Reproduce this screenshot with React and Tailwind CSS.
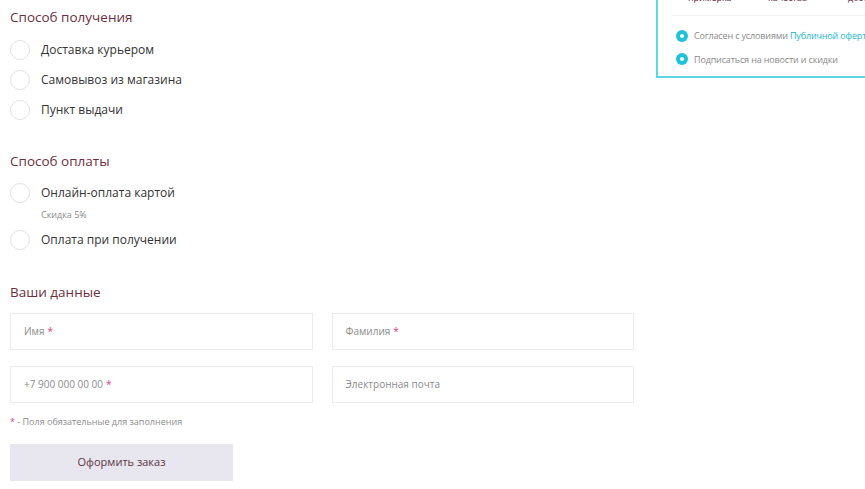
// Checkout form: delivery, payment and contacts

const font = { fontFamily: '"Open Sans", "Noto Sans", sans-serif' };

const Radio = ({ label, note }) => (
  <div className="flex items-start">
    <div className="w-[20px] h-[20px] rounded-full border border-[#e2e2e2] bg-white shrink-0"></div>
    <div className="ml-[11px]">
      <div className="text-[12px] leading-[20px] text-[#333]">{label}</div>
      {note && <div className="text-[9px] leading-[14px] mt-[5px] text-[#8a8a8a]">{note}</div>}
    </div>
  </div>
);

const Heading = ({ children }) => (
  <h2 className="text-[13.5px] leading-[20px] text-[#6d2f40]">{children}</h2>
);

const Field = ({ placeholder, required }) => (
  <div className="h-[37px] border border-[#ececec] bg-white flex items-center px-[13px] text-[10px] text-[#8c8c8c]">
    {placeholder}
    {required && <span className="text-[#e0407a] ml-[3px]">*</span>}
  </div>
);

const Check = ({ children }) => (
  <div className="flex items-center">
    <div className="w-[12px] h-[12px] rounded-full bg-[#1ec3d8] flex items-center justify-center shrink-0">
      <div className="w-[4px] h-[4px] rounded-full bg-white"></div>
    </div>
    <div className="ml-[6px] text-[9px] tracking-[-0.15px] text-[#8a8a8a] whitespace-nowrap">{children}</div>
  </div>
);

export default function App() {
  return (
    <div className="w-[865px] h-[489px] overflow-hidden bg-white flex" style={font}>
      {/* Left column */}
      <div className="w-[635px] shrink-0 pl-[10px] pt-[7px]">
        <Heading>Способ получения</Heading>
        <div className="mt-[13px] flex flex-col gap-[10px]">
          <Radio label="Доставка курьером" />
          <Radio label="Самовывоз из магазина" />
          <Radio label="Пункт выдачи" />
        </div>

        <div className="mt-[31px]">
          <Heading>Способ оплаты</Heading>
        </div>
        <div className="mt-[12px] flex flex-col gap-[8px]">
          <Radio label="Онлайн-оплата картой" note="Скидка 5%" />
          <Radio label="Оплата при получении" />
        </div>

        <div className="mt-[32px]">
          <Heading>Ваши данные</Heading>
        </div>
        <div className="mt-[11px] grid grid-cols-2 gap-x-[19px] gap-y-[16px] pr-[1px]">
          <Field placeholder="Имя" required />
          <Field placeholder="Фамилия" required />
          <Field placeholder="+7 900 000 00 00" required />
          <Field placeholder="Электронная почта" />
        </div>
        <div className="mt-[12px] text-[9px] text-[#8c8c8c]">
          <span className="text-[#e0407a]">*</span> - Поля обязательные для заполнения
        </div>
        <button className="mt-[15px] w-[223px] h-[37px] bg-[#e8e6ee] text-[11px] text-[#5b3443]">
          Оформить заказ
        </button>
      </div>

      {/* Right panel, scrolled partly out of view */}
      <div className="ml-[21px] mt-[-20px] w-[260px] h-[98px] border-l-2 border-b-2 border-[#5fd6e3] shrink-0">
        <div className="ml-[14px] h-[36px] border-b border-[#f2f2f2] flex items-end pb-[11px] text-[9px] text-[#5b2a3a] pl-[16px]">
          <span className="w-[80px]">примерка</span>
          <span className="w-[80px]">качества</span>
          <span>доставка</span>
        </div>
        <div className="pl-[18px] pt-[13px] flex flex-col gap-[10px]">
          <Check>
            Согласен с условиями <span className="text-[#18b7cc]">Публичной оферты</span>
          </Check>
          <Check>Подписаться на новости и скидки</Check>
        </div>
      </div>
    </div>
  );
}
